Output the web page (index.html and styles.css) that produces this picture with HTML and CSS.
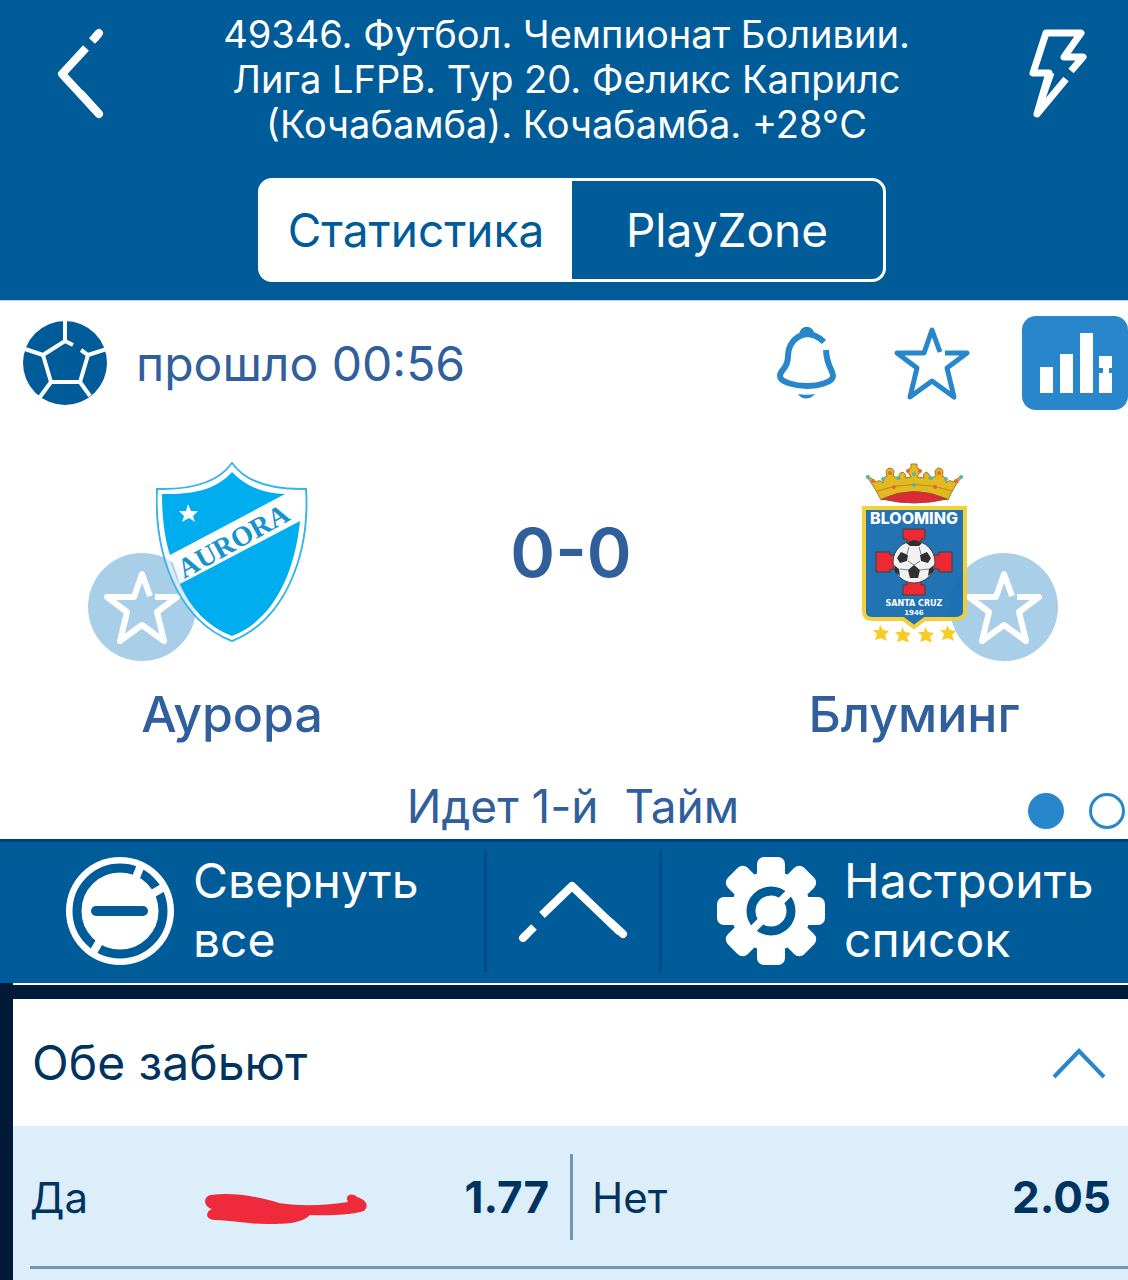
FILE: index.html
```html
<!DOCTYPE html>
<html lang="ru">
<head>
<meta charset="utf-8">
<meta name="viewport" content="width=device-width, initial-scale=1">
<title>Аурора – Блуминг</title>
<link rel="stylesheet" href="styles.css">
</head>
<body>
<header class="header">
  <div class="header-bar">
    <button class="icon-button" type="button" aria-label="Назад">
      <svg width="50" height="92" viewBox="54 28 50 92" fill="none" stroke="#fff" stroke-width="8">
        <path d="M98 33L94 38" stroke-linecap="round"/><path d="M98 33L91 41"/>
        <path d="M85 48L61 74L98 114" stroke-linejoin="round"/><path d="M80 94L98 114" stroke-linecap="round"/>
      </svg>
    </button>
    <h1 class="title">49346. Футбол. Чемпионат Боливии.<br>Лига LFPB. Тур 20. Феликс Каприлс<br>(Кочабамба). Кочабамба. +28°C</h1>
    <button class="icon-button" type="button" aria-label="Быстрая ставка">
      <svg width="60" height="92" viewBox="1028 28 60 92" fill="none" stroke="#fff" stroke-width="7" stroke-linejoin="round">
        <path d="M1071 71L1083 57H1064L1081 33H1046L1033 73H1049L1037 114L1066 79"/><path d="M1052 73L1041 104" stroke-width="5"/>
      </svg>
    </button>
  </div>
  <div class="tabs">
    <button class="tab tab-active" type="button">Статистика</button>
    <button class="tab" type="button">PlayZone</button>
  </div>
</header>

<main>
  <section class="match">
    <div class="status">
      <svg class="ball" width="84" height="84" viewBox="0 0 84 84">
        <circle cx="42" cy="42" r="42" fill="#005c99"/>
        <g fill="none" stroke="#fff" stroke-width="4">
          <path d="M42 0V20M50 24L42 20L20 34L28 61H57L65 34L58 29M20 34L2 28M65 34L84 28M28 61L17 76M57 61L67 75"/>
        </g>
      </svg>
      <span class="elapsed">прошло 00:56</span>
      <div class="actions">
        <button class="icon-button" type="button" aria-label="Уведомления">
          <svg width="60" height="74" viewBox="776 326 60 74" fill="none" stroke="#2787ca" stroke-width="6">
            <path d="M824 342C818 336 813 334 806 334C795 336 788 345 788 356C788 370 780 369 780 376C780 382 795 386 807 386C819 386 833 382 833 376C833 369 827 368 826 350" stroke-linejoin="round"/>
            <path d="M799 335C800 324 813 324 815 335C809 337 804 337 799 335Z" fill="#2787ca" stroke="none"/>
            <path d="M798 394C803 395 810 395 815 394C810 400 802 400 798 394Z" fill="#2787ca" stroke="none"/>
          </svg>
        </button>
        <button class="icon-button" type="button" aria-label="В избранное">
          <svg width="76" height="76" viewBox="0 0 76 76" fill="none" stroke="#2787ca" stroke-width="5" stroke-linejoin="round">
            <path d="M46 27L38 5L30 28H3L23 43L16 72L38 56L60 72L53 43L73 28H51"/>
          </svg>
        </button>
        <button class="icon-button chart" type="button" aria-label="График">
          <svg width="72" height="60" viewBox="0 0 72 60" fill="#fff">
            <path d="M0 34H13V60H0ZM20 21H33V60H20ZM40 0H53V60H40ZM59 23H72V35H69V40H72V60H59V40H63V35H59Z"/>
          </svg>
        </button>
      </div>
    </div>

    <div class="teams">
      <div class="team">
        <div class="crest">
          <svg width="152" height="180" viewBox="156 462 152 180">
            <path d="M232 463C244 480 266 490 306 489C310 555 285 620 232 641C178 620 154 555 157 489C197 490 220 480 232 463Z" fill="none" stroke="#37b4e9" stroke-width="2"/>
            <path d="M232 464C244 481 266 491 305 490C309 554 285 619 232 640C178 619 155 554 158 490C197 491 220 481 232 464ZM232 472C220 488 198 495 162 494C160 560 185 618 232 636C279 618 304 560 302 494C266 495 245 488 232 472Z" fill="#fff" fill-rule="evenodd" opacity=".6"/>
            <path d="M170 555L285 494L302 494L300 521L180 584Z" fill="#fff" opacity=".85"/>
            <path d="M232 472C245 486 264 494 285 494L170 555C164 536 162 515 162 494C196 495 218 488 232 472Z" fill="#00adee"/>
            <path d="M300 521C294 580 269 622 232 636C207 626 191 609 180 584Z" fill="#00adee"/>
            <path d="M188 504L191 511L198 511L193 516L195 522L189 518L182 522L184 516L179 511L186 511Z" fill="#fff"/>
            <text class="aurora" transform="translate(184 579) rotate(-29)">AURORA</text>
          </svg>
          <button class="favorite favorite-home" type="button" aria-label="Аурора в избранное">
            <svg width="76" height="76" viewBox="0 0 76 76" fill="none" stroke="#fff" stroke-width="6" stroke-linejoin="round">
              <path d="M46 27L38 5L30 28H3L23 43L16 72L38 56L60 72L53 43L73 28H51"/>
            </svg>
          </button>
        </div>
        <h2 class="name">Аурора</h2>
      </div>
      <div class="score">0-0</div>
      <div class="team">
        <div class="crest">
          <svg class="crest-away" width="108" height="180" viewBox="860 461 108 180">
            <path d="M881 499Q873 483 866 475Q872 477 876 481Q880 478 883 482Q882 476 887 475Q884 468 890 467Q896 468 893 475L900 478Q897 472 903 471Q907 473 905 477L911 476Q905 468 911 467V463H917V467Q923 468 917 476L924 477Q922 473 926 471Q931 473 929 478L936 475Q933 468 939 467Q945 468 942 475Q947 476 946 482Q949 478 953 481Q957 477 963 475Q955 483 948 499Q914 487 881 499Z" fill="#e2b514" stroke="#94741e"/>
            <path d="M877 490Q914 477 952 490" fill="none" stroke="#b38512"/>
            <path d="M882 498Q914 483 947 498Q914 506 882 498Z" fill="#db1c2c" stroke="#8b4a18"/>
            <g fill="#ed5a29"><circle cx="890" cy="472" r="2"/><circle cx="939" cy="472" r="2"/><circle cx="894" cy="486" r="2"/><circle cx="935" cy="486" r="2"/><circle cx="873" cy="480" r="2"/><circle cx="956" cy="480" r="2"/><circle cx="908" cy="470" r="2"/><circle cx="920" cy="470" r="2"/></g>
            <g fill="#45b6a0"><circle cx="914" cy="484" r="2"/><circle cx="898" cy="477" r="2"/><circle cx="931" cy="477" r="2"/><circle cx="914" cy="473" r="2"/><circle cx="868" cy="476" r="2"/><circle cx="961" cy="476" r="2"/><circle cx="883" cy="478" r="2"/><circle cx="946" cy="478" r="2"/></g>
            <path d="M864 507H965V611Q965 617 956 618H925L914 626L903 618H873Q864 618 864 611Z" fill="#146bb0" stroke="#f3cf2e" stroke-width="4"/>
            <text class="blooming" x="914" y="523">BLOOMING</text>
            <path d="M903 528H925V538H921V584H925V594H903V584H907V538H903Z" fill="#ee1c27" stroke="#333"/>
            <path d="M876 551H890V554H939V551H952V571H939V568H890V571H876Z" fill="#ee1c27" stroke="#333"/>
            <circle cx="914" cy="561" r="21" fill="#f2f2f2" stroke="#333"/>
            <path d="M914 564L920 569L918 577H910L908 569ZM901 551L908 554L907 560L900 562L897 557ZM927 551L920 554L921 560L928 562L931 557ZM906 542L914 539L922 542L919 545H910ZM894 564L899 568L900 575L895 571ZM934 564L929 568L928 575L933 571Z" fill="#242424"/>
            <path d="M909 546L907 553M919 546L921 553M908 560L914 564L920 560M900 568L908 569M920 569L929 568" fill="none" stroke="#777"/>
            <text class="crest-city" x="914" y="605">SANTA CRUZ</text>
            <text class="crest-year" x="914" y="614">1946</text>
            <g fill="#f8c914">
              <path id="s" d="M880 624L883 629L889 630L885 634L887 640L881 637L875 639L877 633L873 629L879 629Z"/>
              <use href="#s" x="22" y="2"/><use href="#s" x="45" y="2"/><use href="#s" x="67"/>
            </g>
          </svg>
          <button class="favorite favorite-away" type="button" aria-label="Блуминг в избранное">
            <svg width="76" height="76" viewBox="0 0 76 76" fill="none" stroke="#fff" stroke-width="6" stroke-linejoin="round">
              <path d="M46 27L38 5L30 28H3L23 43L16 72L38 56L60 72L53 43L73 28H51"/>
            </svg>
          </button>
        </div>
        <h2 class="name">Блуминг</h2>
      </div>
    </div>

    <div class="period">
      <span class="period-text">Идет 1-й&nbsp; Тайм</span>
      <div class="dots"><span class="dot dot-active"></span><span class="dot"></span></div>
    </div>
  </section>

  <div class="toolbar">
    <button class="tool tool-collapse" type="button">
      <svg width="108" height="108" viewBox="0 0 108 108">
        <circle cx="54" cy="54" r="54" fill="#fff"/>
        <circle cx="54" cy="54" r="43" fill="none" stroke="#005c99" stroke-width="9"/>
        <path d="M75 8L69 23M98 30L86 37M35 82L25 99" stroke="#fff" stroke-width="8"/>
        <path d="M30 54H77" stroke="#005c99" stroke-width="10" stroke-linecap="round"/>
      </svg>
      <span>Свернуть<br>все</span>
    </button>
    <button class="tool tool-up" type="button" aria-label="Вверх">
      <svg width="110" height="62" viewBox="518 880 110 62" fill="none" stroke="#fff" stroke-width="8">
        <path d="M542 915L572 886L620 932" stroke-linejoin="round"/><path d="M610 922L623 934M523 938L526 935" stroke-linecap="round"/><path d="M523 938L534 927"/>
      </svg>
    </button>
    <button class="tool tool-setup" type="button">
      <svg width="108" height="108" viewBox="-54 -54 108 108">
        <g fill="#fff">
          <circle r="40"/>
          <rect id="t" x="-14" y="-54" width="28" height="108" rx="7"/>
          <use href="#t" transform="rotate(45)"/><use href="#t" transform="rotate(90)"/><use href="#t" transform="rotate(135)"/>
        </g>
        <circle r="20" fill="none" stroke="#005c99" stroke-width="9"/>
        <path d="M9 -9L22 -22M-9 9L-22 22" stroke="#fff" stroke-width="8"/>
      </svg>
      <span>Настроить<br>список</span>
    </button>
  </div>

  <section class="market">
    <button class="market-head" type="button" aria-expanded="true">
      <span>Обе забьют</span>
      <svg width="54" height="32" viewBox="0 0 54 32" fill="none" stroke="#2787ca" stroke-width="4"><path d="M2 30L27 4L52 30"/></svg>
    </button>
    <div class="market-body">
      <div class="odds">
        <button class="odd" type="button">
          <span>Да</span>
          <svg class="mark" width="162" height="36" viewBox="204 1192 162 36" fill="#ee2a3b"><path d="M210 1196C230 1193 255 1197 278 1204C303 1208 328 1206 347 1203C343 1196 351 1193 356 1198C366 1201 368 1207 363 1212C350 1216 326 1217 309 1216C300 1225 282 1225 266 1225C247 1225 235 1222 214 1221C203 1220 205 1212 211 1210C202 1208 202 1197 210 1196Z"/></svg>
          <strong>1.77</strong>
        </button>
        <button class="odd" type="button">
          <span>Нет</span>
          <strong>2.05</strong>
        </button>
      </div>
    </div>
  </section>
</main>
</body>
</html>
```
FILE: styles.css
```css
* { box-sizing: border-box; }

body {
  margin: 0;
  min-height: 100vh;
  display: flex;
  flex-direction: column;
  background: #fff;
  color: #003460;
  font-family: Inter, "Noto Sans", sans-serif;
  font-size: 46px;
}

main { flex: 1; display: flex; flex-direction: column; }

button {
  margin: 0;
  padding: 0;
  border: 0;
  background: none;
  color: inherit;
  font: inherit;
  text-align: left;
  cursor: pointer;
}

svg { display: block; flex: none; }

/* Header */
.header {
  background: #005c99;
  color: #fff;
  padding: 12px 40px 18px 55px;
}

.header-bar {
  display: flex;
  align-items: flex-start;
  justify-content: space-between;
}

.header-bar .icon-button { padding-top: 16px; }

.title {
  margin: 0;
  font-size: 38px;
  line-height: 45px;
  font-weight: 400;
  text-align: center;
}

.tabs {
  display: flex;
  width: 628px;
  max-width: 100%;
  height: 104px;
  margin: 31px auto 0;
  border: 3px solid #fff;
  border-radius: 14px;
  background: linear-gradient(90deg, #fff 50%, #005c99 50%);
}

.tab { flex: 1; text-align: center; }
.tab-active { color: #005c99; }

/* Match */
.match {
  border-top: 1px solid #b3d7f0;
  color: #305f9b;
}

.status {
  display: flex;
  align-items: center;
  gap: 29px;
  padding: 15px 0 0 23px;
}

.elapsed { font-size: 48px; }

.actions {
  display: flex;
  align-items: center;
  gap: 58px;
  margin-left: auto;
}

.chart {
  margin-left: -6px;
  padding: 17px 16px 17px 18px;
  border-radius: 14px;
  background: #2787ca;
}

.teams {
  display: grid;
  grid-template-columns: 464fr 236fr 428fr;
  padding-top: 52px;
}

.team { display: flex; flex-direction: column; align-items: center; }
.crest { position: relative; }
.crest-away { opacity: .94; }

.favorite {
  position: absolute;
  bottom: -19px;
  z-index: -1;
  display: grid;
  place-items: center;
  width: 108px;
  height: 108px;
  border-radius: 50%;
  background: #a9cee8;
}

.favorite-home { right: 112px; }
.favorite-away { left: 90px; }

.name {
  margin: 44px 0 0;
  font-size: 50px;
  line-height: 56px;
  font-weight: 500;
}

.score {
  padding: 51px 22px 0 0;
  font-size: 68px;
  line-height: 78px;
  font-weight: 600;
  text-align: center;
}

.aurora { font: 700 28px "Liberation Serif", serif; fill: #1793cc; }
.blooming { font: 800 16px Inter, sans-serif; fill: #fff; text-anchor: middle; }
.crest-city { font: 700 8px "DejaVu Sans", sans-serif; fill: #fff; text-anchor: middle; }
.crest-year { font: 700 7px "DejaVu Sans", sans-serif; fill: #fff; text-anchor: middle; }

.period {
  display: grid;
  grid-template-columns: 1fr auto 1fr;
  align-items: center;
  padding: 36px 3px 5px 21px;
}

.period-text { grid-column: 2; line-height: 56px; }
.dots { display: flex; justify-content: flex-end; gap: 25px; padding-top: 10px; }
.dot { width: 36px; height: 36px; border: 3px solid #2787ca; border-radius: 50%; }
.dot-active { background: #2787ca; }

/* Toolbar */
.toolbar {
  display: grid;
  grid-template-columns: 487fr 175fr 466fr;
  padding: 8px 0 11px;
  border-top: 3px solid #00407c;
  background: #005c99;
  color: #fff;
  font-size: 48px;
  line-height: 59px;
}

.tool { display: flex; align-items: center; gap: 19px; height: 122px; }
.tool-collapse { padding-left: 66px; border-right: 3px solid #004a87; }
.tool-up { justify-content: center; border-right: 3px solid #004a87; }
.tool-setup { padding-left: 55px; }
.tool span { padding-bottom: 2px; }

/* Market */
.market {
  flex: 1;
  display: flex;
  flex-direction: column;
  padding-top: 16px;
  border-left: 13px solid #001a38;
  background: #001a38;
  box-shadow: inset 0 2px #fff;
}

.market-head {
  display: flex;
  align-items: center;
  justify-content: space-between;
  height: 127px;
  padding: 0 22px 0 19px;
  background: #fff;
  font-size: 48px;
}

.market-body { flex: 1; padding-left: 17px; background: #dceefa; }

.odds {
  display: grid;
  grid-template-columns: 543fr 555fr;
  padding: 28px 0 26px;
  border-bottom: 3px solid #7395b5;
}

.odd {
  display: flex;
  align-items: center;
  justify-content: space-between;
  height: 86px;
  padding: 0 17px 0 19px;
  font-size: 42px;
}

.odd:first-child { padding: 0 21px 0 0; border-right: 3px solid #7395b5; }
.odd strong { font-size: 44px; font-weight: 700; }
.mark { margin: 24px 0 0 20px; }
```
